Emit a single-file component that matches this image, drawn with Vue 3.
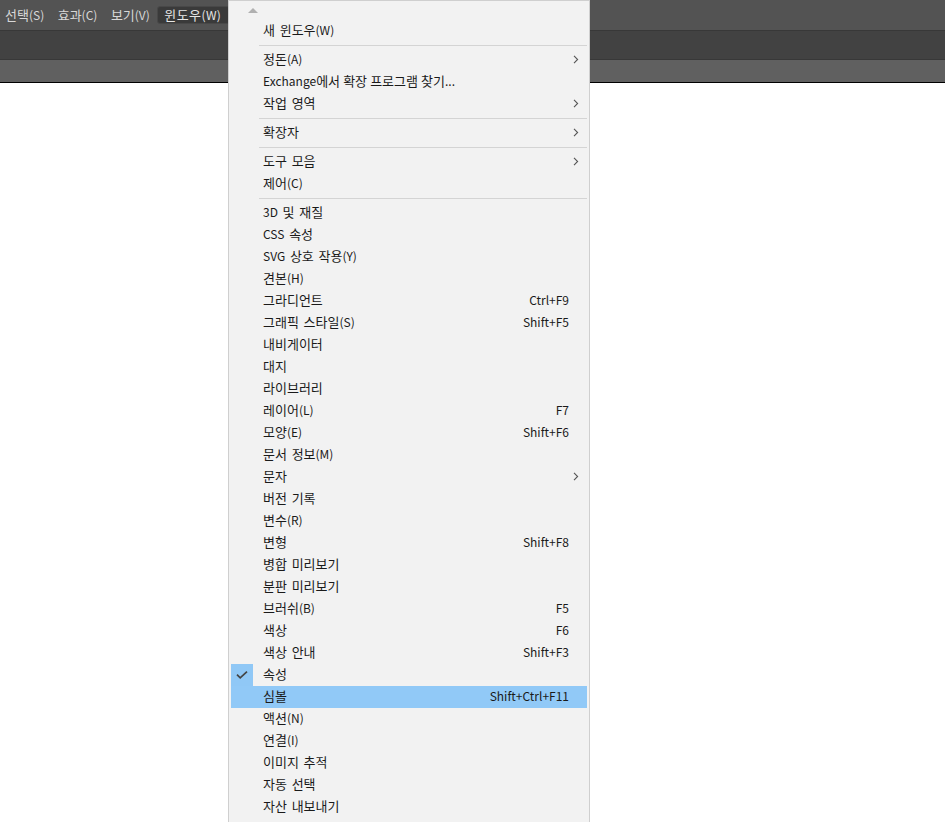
<template>
  <div class="app">
    <header class="chrome">
      <nav class="menubar">
        <span v-for="m in menus" :key="m" :class="['top-item', { active: m === '윈도우(W)' }]">
          <span v-for="(run, r) in splitRuns(m)" :key="r" :class="{ ko: run.ko }">{{ run.text }}</span>
        </span>
      </nav>
      <div class="optionbar"></div>
      <div class="tabbar"></div>
    </header>
    <main class="canvas"></main>

    <div class="menu">
      <div class="scroll-up"><span class="up-arrow"></span></div>
      <template v-for="(item, i) in items" :key="i">
        <div v-if="item.sep" class="sep"></div>
        <div v-else :class="['row', { hover: item.hover }]">
          <span :class="['gutter', { checked: item.checked }]">
            <svg v-if="item.checked" width="12" height="10" viewBox="0 0 12 10">
              <path d="M1 4.6 L4.2 7.8 L11 1.6" fill="none" stroke="#444" stroke-width="1.7" />
            </svg>
          </span>
          <span :class="['label', { tight: item.tight }]">
            <span v-for="(run, r) in splitRuns(item.label)" :key="r" :class="{ ko: run.ko }">{{ run.text }}</span>
          </span>
          <span class="shortcut">{{ item.key }}</span>
          <span class="arrow">
            <svg v-if="item.sub" width="6" height="9" viewBox="0 0 6 9">
              <path d="M1 .8 L4.6 4.5 L1 8.2" fill="none" stroke="#555" stroke-width="1.1" />
            </svg>
          </span>
        </div>
      </template>
    </div>
  </div>
</template>

<script setup>
const menus = ['선택(S)', '효과(C)', '보기(V)', '윈도우(W)']

const items = [
  { label: '새 윈도우(W)' },
  { sep: true },
  { label: '정돈(A)', sub: true },
  { label: 'Exchange에서 확장 프로그램 찾기...', tight: true },
  { label: '작업 영역', sub: true },
  { sep: true },
  { label: '확장자', sub: true },
  { sep: true },
  { label: '도구 모음', sub: true },
  { label: '제어(C)' },
  { sep: true },
  { label: '3D 및 재질' },
  { label: 'CSS 속성' },
  { label: 'SVG 상호 작용(Y)' },
  { label: '견본(H)' },
  { label: '그라디언트', key: 'Ctrl+F9' },
  { label: '그래픽 스타일(S)', key: 'Shift+F5' },
  { label: '내비게이터' },
  { label: '대지' },
  { label: '라이브러리' },
  { label: '레이어(L)', key: 'F7' },
  { label: '모양(E)', key: 'Shift+F6' },
  { label: '문서 정보(M)' },
  { label: '문자', sub: true },
  { label: '버전 기록' },
  { label: '변수(R)' },
  { label: '변형', key: 'Shift+F8' },
  { label: '병합 미리보기' },
  { label: '분판 미리보기' },
  { label: '브러쉬(B)', key: 'F5' },
  { label: '색상', key: 'F6' },
  { label: '색상 안내', key: 'Shift+F3' },
  { label: '속성', checked: true },
  { label: '심볼', key: 'Shift+Ctrl+F11', hover: true },
  { label: '액션(N)' },
  { label: '연결(I)' },
  { label: '이미지 추적' },
  { label: '자동 선택' },
  { label: '자산 내보내기' }
]

// hangul is set a size up so its advance comes out near the reference's 12px
const splitRuns = (text) =>
  text.match(/[\uac00-\ud7a3]+|[^\uac00-\ud7a3]+/g).map((run) => ({
    text: run,
    ko: /[\uac00-\ud7a3]/.test(run)
  }))
</script>

<style>
html,
body {
  margin: 0;
  background: #fff;
  overflow: hidden;
}
</style>

<style scoped>
.app {
  position: relative;
  width: 945px;
  height: 822px;
  overflow: hidden;
  font-family: "Noto Sans CJK KR", "Noto Sans", sans-serif;
  font-size: 12px;
  background: #fff;
}

.ko {
  font-size: 13px;
}

.menubar {
  height: 30px;
  background: #535353;
  display: flex;
  align-items: center;
  gap: 13.5px;
  padding-left: 5px;
  box-sizing: border-box;
  color: #d8d8d8;
}

.top-item {
  line-height: 16px;
  white-space: nowrap;
}

.top-item.active {
  background: #3a3a3a;
  border: 1px solid #484848;
  border-radius: 3px;
  padding: 0 8px 0 6px;
  margin-left: -6px;
  color: #e6e6e6;
  letter-spacing: 0.4px;
}

.optionbar {
  height: 30px;
  box-sizing: border-box;
  background: #424242;
  border-top: 1px solid #383838;
  border-bottom: 1px solid #383838;
}

.tabbar {
  height: 22px;
  background: #606060;
  border-bottom: 1px solid #000;
  box-sizing: content-box;
}

.menu {
  position: absolute;
  left: 228px;
  top: 0;
  width: 362px;
  height: 822px;
  box-sizing: border-box;
  border: 1px solid #cfcfcf;
  border-bottom: none;
  padding-left: 2px;
  padding-right: 2px;
  background: #f2f2f2;
  color: #1a1a1a;
}

.scroll-up {
  height: 19px;
  display: flex;
  justify-content: center;
  width: 44px;
  padding-top: 7px;
  box-sizing: border-box;
}

.up-arrow {
  width: 0;
  height: 0;
  border-left: 5px solid transparent;
  border-right: 5px solid transparent;
  border-bottom: 5px solid #b0b0b0;
}

.sep {
  height: 7px;
  margin-left: 28px;
  display: flex;
  align-items: center;
}

.sep::before {
  content: "";
  flex: 1;
  height: 1px;
  background: #d4d4d4;
}

.row {
  height: 22px;
  display: flex;
  align-items: center;
}

.row.hover {
  background: #91c9f7;
}

.gutter {
  width: 22px;
  height: 22px;
  flex: none;
  display: flex;
  align-items: center;
  justify-content: center;
  margin-right: 10px;
}

.gutter.checked {
  background: #90c8f6;
}

.label {
  flex: 1;
  white-space: nowrap;
  padding-bottom: 4px;
  word-spacing: 2px;
}

.label.tight {
  word-spacing: 0.4px;
}

.shortcut {
  white-space: nowrap;
  padding-bottom: 4px;
}

.arrow {
  width: 18px;
  flex: none;
  display: flex;
  padding-left: 4px;
  padding-bottom: 1px;
  box-sizing: border-box;
}
</style>
